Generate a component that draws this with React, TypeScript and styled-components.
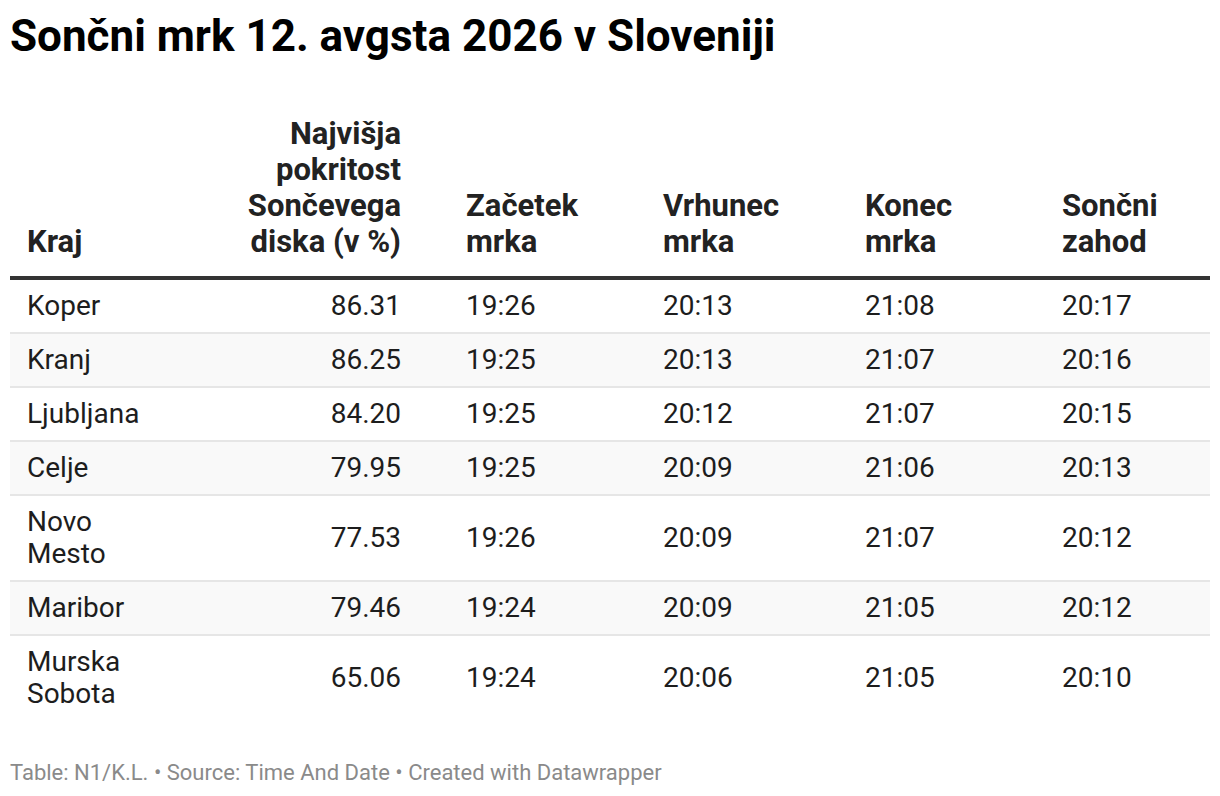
import React from "react";
import styled, { createGlobalStyle } from "styled-components";

const GlobalStyle = createGlobalStyle`
  html, body {
    margin: 0;
    padding: 0;
    background: #fff;
  }
  body {
    font-family: Roboto, "Liberation Sans", Arial, sans-serif;
    color: #1d1d1d;
  }
`;

const Page = styled.div`
  padding: 10px;
  width: 1200px;
`;

const Title = styled.h1`
  margin: 0;
  font-size: 44px;
  line-height: 52px;
  font-weight: 700;
  color: #000;
`;

const Table = styled.div`
  margin-top: 54px;
  display: grid;
  grid-template-columns: 200px 239px 197px 202px 197px 165px;
`;

const HeadCell = styled.div<{ $right?: boolean }>`
  display: flex;
  align-items: flex-end;
  justify-content: ${(p) => (p.$right ? "flex-end" : "flex-start")};
  text-align: ${(p) => (p.$right ? "right" : "left")};
  padding: 0 ${(p) => (p.$right ? "48px" : "17px")} 16px 17px;
  font-size: 31px;
  line-height: 36px;
  font-weight: 700;
  color: #222;
  border-bottom: 4px solid #333;
`;

const Cell = styled.div<{ $right?: boolean; $shade?: boolean; $last?: boolean }>`
  display: flex;
  align-items: center;
  justify-content: ${(p) => (p.$right ? "flex-end" : "flex-start")};
  padding: 10px ${(p) => (p.$right ? "48px" : "17px")} 10px 17px;
  font-size: 28px;
  line-height: 32px;
  background: ${(p) => (p.$shade ? "#f9f9f9" : "#fff")};
  border-bottom: ${(p) => (p.$last ? "none" : "2px solid #e6e6e6")};
`;

const Place = styled.span`
  max-width: 120px;
`;

const Footer = styled.div`
  margin-top: 41px;
  font-size: 22px;
  line-height: 24px;
  color: #8a8a8a;
`;

type Row = {
  place: string;
  cover: string;
  start: string;
  peak: string;
  end: string;
  sunset: string;
};

const rows: Row[] = [
  { place: "Koper", cover: "86.31", start: "19:26", peak: "20:13", end: "21:08", sunset: "20:17" },
  { place: "Kranj", cover: "86.25", start: "19:25", peak: "20:13", end: "21:07", sunset: "20:16" },
  { place: "Ljubljana", cover: "84.20", start: "19:25", peak: "20:12", end: "21:07", sunset: "20:15" },
  { place: "Celje", cover: "79.95", start: "19:25", peak: "20:09", end: "21:06", sunset: "20:13" },
  { place: "Novo Mesto", cover: "77.53", start: "19:26", peak: "20:09", end: "21:07", sunset: "20:12" },
  { place: "Maribor", cover: "79.46", start: "19:24", peak: "20:09", end: "21:05", sunset: "20:12" },
  { place: "Murska Sobota", cover: "65.06", start: "19:24", peak: "20:06", end: "21:05", sunset: "20:10" },
];

export default function App() {
  return (
    <>
      <GlobalStyle />
      <Page>
        <Title>Sončni mrk 12. avgsta 2026 v Sloveniji</Title>
        <Table>
          <HeadCell>Kraj</HeadCell>
          <HeadCell $right>
            Najvišja
            <br />
            pokritost
            <br />
            Sončevega
            <br />
            diska (v %)
          </HeadCell>
          <HeadCell>
            Začetek
            <br />
            mrka
          </HeadCell>
          <HeadCell>
            Vrhunec
            <br />
            mrka
          </HeadCell>
          <HeadCell>
            Konec
            <br />
            mrka
          </HeadCell>
          <HeadCell>
            Sončni
            <br />
            zahod
          </HeadCell>
          {rows.map((r, i) => {
            const shade = i % 2 === 1;
            const last = i === rows.length - 1;
            return (
              <React.Fragment key={r.place}>
                <Cell $shade={shade} $last={last}>
                  <Place>{r.place}</Place>
                </Cell>
                <Cell $shade={shade} $last={last} $right>
                  {r.cover}
                </Cell>
                <Cell $shade={shade} $last={last}>{r.start}</Cell>
                <Cell $shade={shade} $last={last}>{r.peak}</Cell>
                <Cell $shade={shade} $last={last}>{r.end}</Cell>
                <Cell $shade={shade} $last={last}>{r.sunset}</Cell>
              </React.Fragment>
            );
          })}
        </Table>
        <Footer>Table: N1/K.L. • Source: Time And Date • Created with Datawrapper</Footer>
      </Page>
    </>
  );
}
